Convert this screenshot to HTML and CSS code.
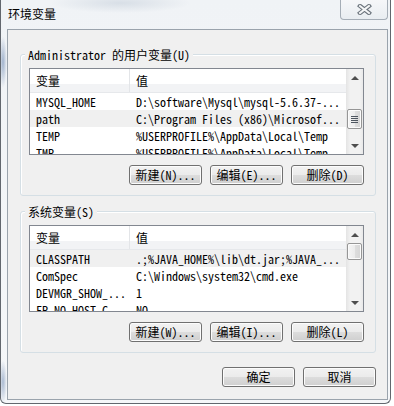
FILE: index.html
```html
<!DOCTYPE html>
<html lang="zh-CN">
<head>
<meta charset="utf-8">
<title>环境变量</title>
<link rel="stylesheet" href="styles.css">
</head>
<body>
<div class="window">
  <div class="titlebar">
    <span class="title">环境变量</span>
    <div class="close">
      <svg width="15" height="11" viewBox="0 0 15 11">
        <path d="M3 2 L12 9 M12 2 L3 9" stroke="#6a727b" stroke-width="4.2" stroke-linecap="square" fill="none"/>
        <path d="M3 2 L12 9 M12 2 L3 9" stroke="#f4f5f6" stroke-width="2" stroke-linecap="square" fill="none"/>
      </svg>
    </div>
  </div>
  <div class="client">
    <section class="group first">
      <span class="legend">Administrator 的用户变量(U)</span>
      <div class="list">
        <div class="list-body">
          <div class="header"><div class="c1">变量</div><div class="c2">值</div></div>
          <div class="row"><div class="c1">MYSQL_HOME</div><div class="c2">D:\software\Mysql\mysql-5.6.37-...</div></div>
          <div class="row sel"><div class="c1">path</div><div class="c2">C:\Program Files (x86)\Microsof...</div></div>
          <div class="row"><div class="c1">TEMP</div><div class="c2">%USERPROFILE%\AppData\Local\Temp</div></div>
          <div class="row"><div class="c1">TMP</div><div class="c2">%USERPROFILE%\AppData\Local\Temp</div></div>
        </div>
        <div class="vscroll">
          <div class="sb-btn"><span class="tri-up"></span></div>
          <div class="track"><div class="thumb thumb-a"><span class="grip"></span></div></div>
          <div class="sb-btn"><span class="tri-down"></span></div>
        </div>
      </div>
      <div class="btnrow">
        <button class="btn">新建(N)...</button>
        <button class="btn">编辑(E)...</button>
        <button class="btn">删除(D)</button>
      </div>
    </section>
    <section class="group second">
      <span class="legend">系统变量(S)</span>
      <div class="list">
        <div class="list-body">
          <div class="header"><div class="c1">变量</div><div class="c2">值</div></div>
          <div class="row sel"><div class="c1">CLASSPATH</div><div class="c2">.;%JAVA_HOME%\lib\dt.jar;%JAVA_...</div></div>
          <div class="row"><div class="c1">ComSpec</div><div class="c2">C:\Windows\system32\cmd.exe</div></div>
          <div class="row"><div class="c1">DEVMGR_SHOW_...</div><div class="c2">1</div></div>
          <div class="row"><div class="c1">FP_NO_HOST_C...</div><div class="c2">NO</div></div>
        </div>
        <div class="vscroll">
          <div class="sb-btn"><span class="tri-up"></span></div>
          <div class="track"><div class="thumb thumb-b"></div></div>
          <div class="sb-btn"><span class="tri-down"></span></div>
        </div>
      </div>
      <div class="btnrow">
        <button class="btn">新建(W)...</button>
        <button class="btn">编辑(I)...</button>
        <button class="btn">删除(L)</button>
      </div>
    </section>
    <div class="btnrow dialog">
      <button class="btn">确定</button>
      <button class="btn">取消</button>
    </div>
  </div>
</div>
</body>
</html>
```
FILE: styles.css
```css
* { box-sizing: border-box; }

body {
  margin: 0;
  background: #ffffff;
  font-family: "Noto Sans Mono CJK SC", "Noto Sans CJK SC", monospace;
  font-size: 12px;
  color: #000;
}

.window {
  width: 391px;
  height: 404px;
  border: 1px solid #62676e;
  border-top: none;
  border-radius: 0 0 6px 6px;
  display: flex;
  flex-direction: column;
  background:
    radial-gradient(ellipse 70px 10px at 120px 3px, rgba(130,150,175,.22), transparent),
    radial-gradient(ellipse 4px 26px at 2px 62px, rgba(95,125,170,.55), transparent),
    radial-gradient(ellipse 4px 22px at 2px 382px, rgba(95,125,170,.5), transparent),
    linear-gradient(#f0f3f6, #f5f7f9);
}

.titlebar {
  height: 29px;
  display: flex;
  justify-content: space-between;
  align-items: flex-start;
}

.title {
  font-family: "Noto Sans CJK SC", sans-serif;
  font-size: 12px;
  line-height: 16px;
  margin: 6px 0 0 7px;
}

.close {
  width: 48px;
  height: 20px;
  margin-right: 2px;
  border: 1px solid #a5adb6;
  border-top: none;
  border-radius: 0 0 4px 4px;
  background: linear-gradient(#f6f7f9, #e9edf1);
  display: flex;
  align-items: center;
  justify-content: center;
}

.client {
  flex: 1;
  margin: 0 2px 3px 6px;
  border: 1px solid #9aa3ac;
  background: #f0f0f0;
  padding: 0 11px 0 12px;
}

.group {
  position: relative;
  height: 142px;
  border: 1px solid #d5dfe5;
  border-radius: 3px;
  box-shadow: inset 1px 1px 0 #fff;
  padding: 13px 11px 0 8px;
}
.group.first { margin-top: 24px; }
.group.second { margin-top: 15px; }

.legend {
  position: absolute;
  top: -8px;
  left: 4px;
  padding: 0 3px;
  line-height: 15px;
  background: #f0f0f0;
  white-space: pre;
}

.list {
  height: 87px;
  border: 1px solid #828790;
  background: #fff;
  display: flex;
}

.list-body {
  flex: 1;
  overflow: hidden;
}

.header {
  height: 24px;
  display: flex;
  border-bottom: 1px solid #e6e8eb;
  background: linear-gradient(#ffffff 0, #ffffff 64%, #f2f3f5 64%, #f2f3f5 100%);
  line-height: 23px;
}
.header .c1 {
  width: 100px;
  padding-left: 6px;
  border-right: 1px solid #e3e5e8;
}
.header .c2 { padding-left: 6px; }

.row {
  height: 17px;
  line-height: 17px;
  display: flex;
  white-space: pre;
}
.row.sel { background: #f0f0f0; }
.row .c1 {
  width: 100px;
  padding-left: 6px;
  overflow: hidden;
}
.row .c2 {
  flex: 1;
  padding-left: 6px;
  overflow: hidden;
}

.vscroll {
  width: 17px;
  display: flex;
  flex-direction: column;
  background: linear-gradient(to right, #e4e4e4, #f2f2f2 25%, #f2f2f2 80%, #e9e9e9);
}
.sb-btn {
  height: 17px;
  display: flex;
  align-items: center;
  justify-content: center;
}
.tri-up, .tri-down {
  width: 0;
  height: 0;
  border-left: 4px solid transparent;
  border-right: 4px solid transparent;
}
.tri-up { border-bottom: 4px solid #4f4f4f; }
.tri-down { border-top: 4px solid #4f4f4f; }

.track { flex: 1; }

.thumb {
  margin: 0 1px;
  border: 1px solid #969696;
  border-radius: 2px;
  background: linear-gradient(to right, #f5f5f5, #ececec 50%, #dedede 51%, #d6d6d6);
  box-shadow: inset 0 0 0 1px #fbfbfb;
  display: flex;
  align-items: center;
  justify-content: center;
}
.thumb-a { margin-top: 23px; height: 20px; }
.thumb-b { margin-top: 0; height: 17px; }

.grip {
  width: 7px;
  height: 7px;
  background: repeating-linear-gradient(#4e5660 0 1px, transparent 1px 2px);
}

.btnrow {
  display: flex;
  justify-content: flex-end;
  gap: 8px;
  margin-top: 10px;
}
.btnrow.dialog { margin-top: 14px; }

.btn {
  width: 73px;
  height: 20px;
  padding: 0;
  font: inherit;
  font-size: 12px;
  line-height: 18px;
  color: #000;
  border: 1px solid #707070;
  border-radius: 3px;
  background: linear-gradient(#f2f2f2 0, #ebebeb 50%, #dddddd 50%, #cfcfcf 100%);
  box-shadow: inset 0 0 0 1px #fcfcfc;
  white-space: pre;
}
```
